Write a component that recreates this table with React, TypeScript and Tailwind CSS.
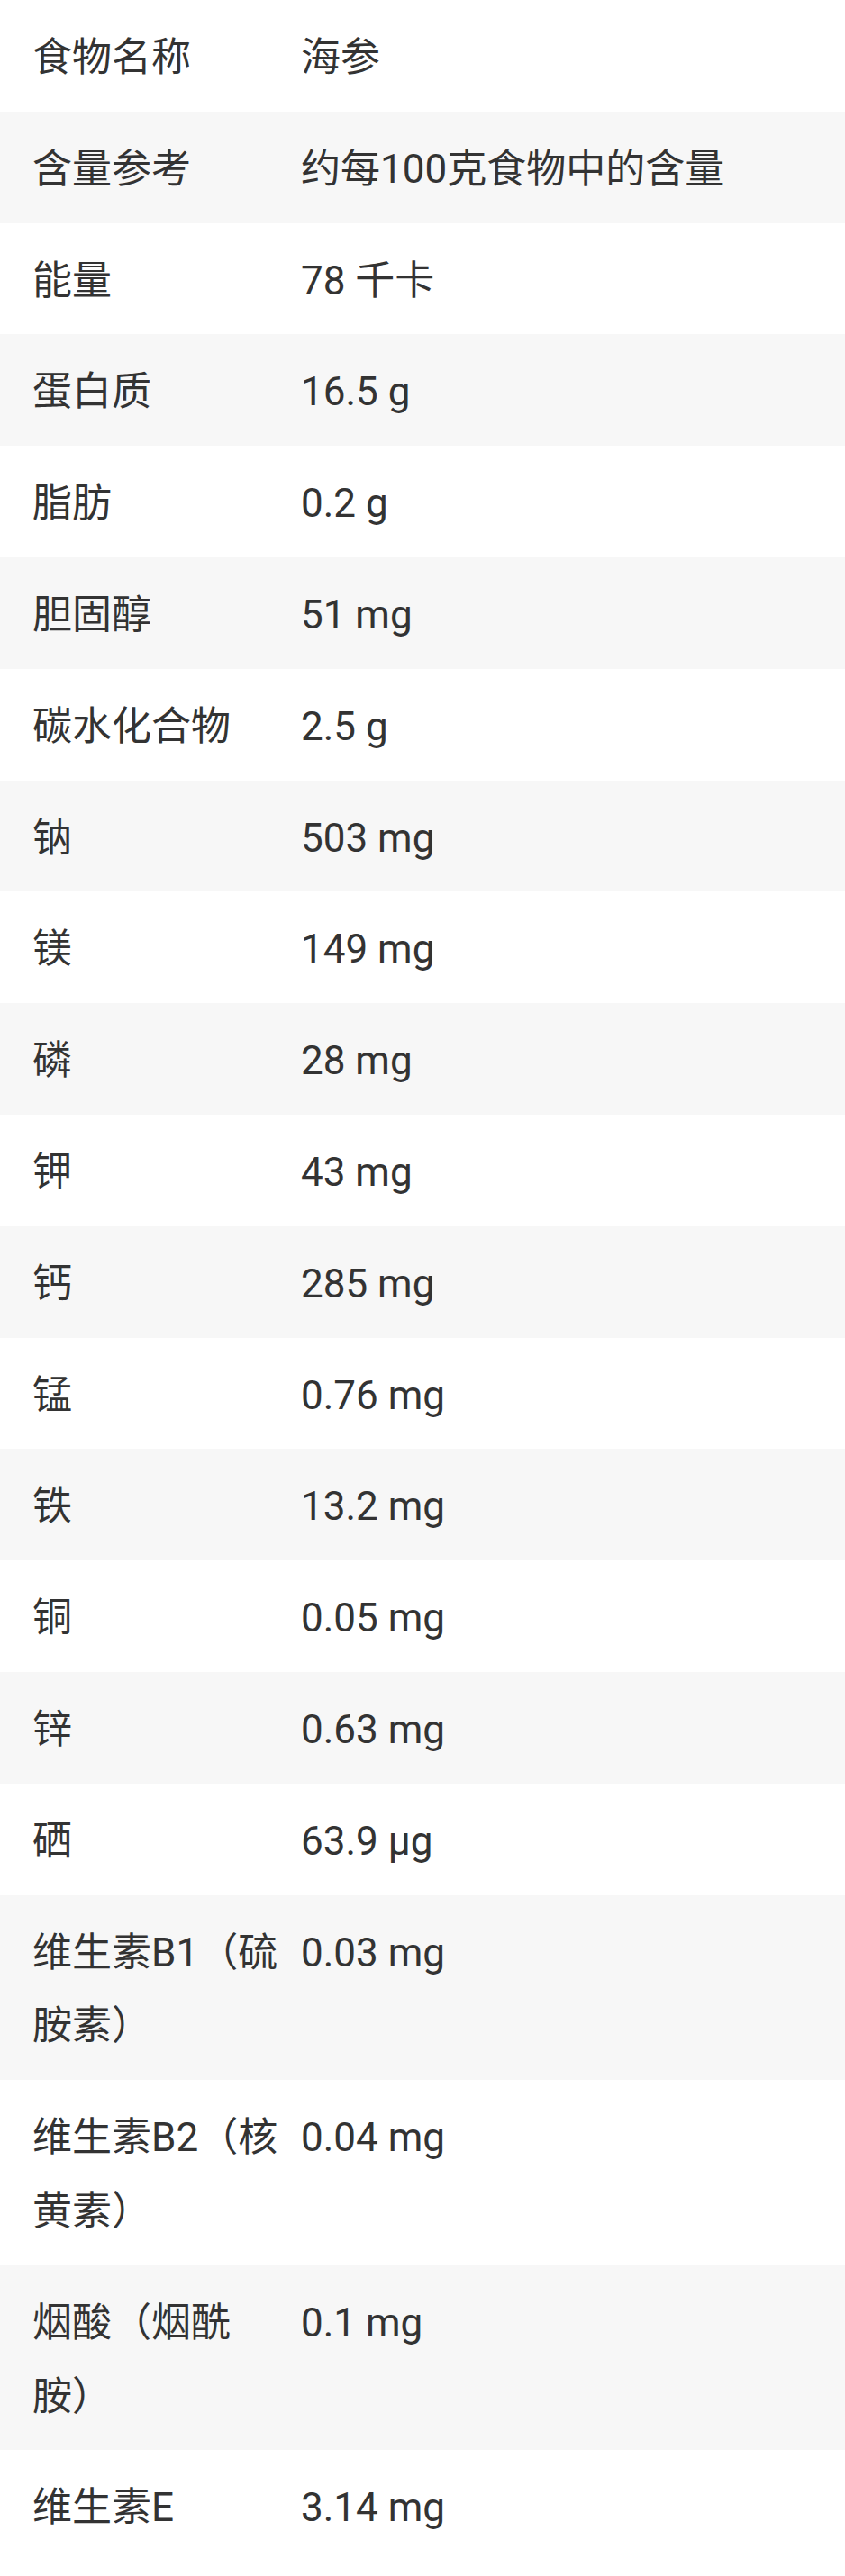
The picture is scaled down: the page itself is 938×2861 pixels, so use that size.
const rows: [string, string][] = [
  ['食物名称', '海参'],
  ['含量参考', '约每100克食物中的含量'],
  ['能量', '78 千卡'],
  ['蛋白质', '16.5 g'],
  ['脂肪', '0.2 g'],
  ['胆固醇', '51 mg'],
  ['碳水化合物', '2.5 g'],
  ['钠', '503 mg'],
  ['镁', '149 mg'],
  ['磷', '28 mg'],
  ['钾', '43 mg'],
  ['钙', '285 mg'],
  ['锰', '0.76 mg'],
  ['铁', '13.2 mg'],
  ['铜', '0.05 mg'],
  ['锌', '0.63 mg'],
  ['硒', '63.9 μg'],
  ['维生素B1（硫胺素）', '0.03 mg'],
  ['维生素B2（核黄素）', '0.04 mg'],
  ['烟酸（烟酰胺）', '0.1 mg'],
  ['维生素E', '3.14 mg'],
];

const App = () => {
  return (
    <div
      className="min-h-screen bg-white text-[#333333] text-[44px] leading-[81.8px]"
      style={{ fontFamily: 'Roboto, "Noto Sans CJK SC", sans-serif' }}
    >
      {rows.map(([name, value], i) => (
        <div
          key={name}
          className={`grid grid-cols-[313px_1fr] items-start pt-[24px] pb-[18px] ${i % 2 === 1 ? 'bg-[#f7f7f7]' : 'bg-white'}`}
        >
          <div className="pl-[36px]">{name}</div>
          <div className="pl-[21px]">{value}</div>
        </div>
      ))}
    </div>
  );
};

export default App;
